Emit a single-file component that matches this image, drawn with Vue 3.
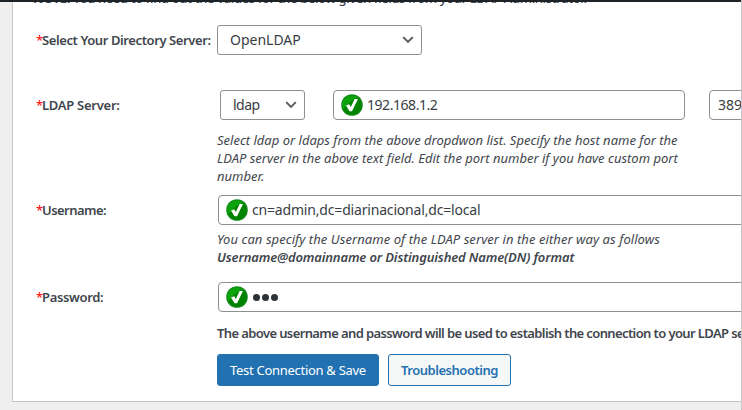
<script setup>
import { h } from 'vue'

const help = [
  'Select ldap or ldaps from the above dropdwon list. Specify the host name for the',
  'LDAP server in the above text field. Edit the port number if you have custom port',
  'number.'
]

const Chevron = () =>
  h('svg', { class: 'chevron', width: 12, height: 8, viewBox: '0 0 12 8' }, [
    h('path', { d: 'M1.2 1.2 L6 6 L10.8 1.2', fill: 'none', stroke: '#555a5f', 'stroke-width': 1.9 })
  ])

const Valid = () =>
  h('svg', { class: 'valid', width: 22, height: 22, viewBox: '0 0 22 22' }, [
    h('circle', { cx: 11, cy: 11, r: 10.8, fill: '#1c8a24' }),
    h('circle', { cx: 11, cy: 11, r: 9.9, fill: '#008400' }),
    h('path', { d: 'M2.2 15.5 A9.9 9.9 0 0 1 17.5 3.6 Q8 7 2.2 15.5Z', fill: '#0ca30c' }),
    h('path', { d: 'M5 11.6 L8.2 10.2 L9.8 13 L13.6 4.9 L17 4.9 L11 17.2 L8.5 17.2 Z', fill: '#fff' })
  ])
</script>

<template>
  <div class="page">
    <div class="adminbar"></div>
    <main class="card">
      <p class="note"><span class="t-note"><b>NOTE:</b> You need to find out the values for the below given fields from your LDAP Administrator.</span></p>

      <div class="row directory">
        <label><i>*</i><span class="t-dir">Select Your Directory Server:</span></label>
        <div class="box select-dir"><span class="t-open">OpenLDAP</span><Chevron /></div>
      </div>

      <div class="row server">
        <label><i>*</i><span class="t-ldap">LDAP Server:</span></label>
        <div class="fields">
          <div class="box select-proto"><span class="t-proto">ldap</span><Chevron /></div>
          <div class="box host"><Valid /><span class="t-host">192.168.1.2</span></div>
          <div class="box port"><span>389</span></div>
        </div>
      </div>
      <div class="help help-server">
        <div v-for="(line, n) in help" :key="n">{{ line }}</div>
      </div>

      <div class="row username">
        <label><i>*</i><span class="t-user">Username:</span></label>
        <div class="box wide"><Valid /><span class="t-cn">cn=admin,dc=diarinacional,dc=local</span></div>
      </div>
      <div class="help help-user">
        <div><span class="t-way">You can specify the Username of the LDAP server in the either way as follows</span></div>
        <div><b class="t-dn">Username@domainname or Distinguished Name(DN) format</b></div>
      </div>

      <div class="row password">
        <label><i>*</i><span class="t-pass">Password:</span></label>
        <div class="box wide"><Valid /><span class="dots"><em></em><em></em><em></em></span></div>
      </div>
      <p class="summary"><span class="t-sum">The above username and password will be used to establish the connection to your LDAP server.</span></p>

      <div class="actions">
        <button class="primary"><span class="t-test">Test Connection &amp; Save</span></button>
        <button class="secondary"><span class="t-trouble">Troubleshooting</span></button>
      </div>
    </main>
  </div>
</template>

<style>
body { overflow: hidden; }
</style>

<style scoped>
* { box-sizing: border-box; }
.page {
  width: 742px;
  height: 410px;
  overflow: hidden;
  background: #efefef;
  border-right: 1px solid #c8c8c8;
  font: 13px/18px "Noto Sans", sans-serif;
  color: #3f464d;
  white-space: nowrap;
}
.adminbar { height: 2px; background: #1d2327; }
.card {
  margin-left: 12px;
  height: 400px;
  overflow: hidden;
  background: #fff;
  border: solid #c6c6c7;
  border-width: 0 0 1px 1px;
}
.note { margin: -13px 0 0 20px; height: 18px; line-height: 18px; font-weight: 500; }
.row { display: flex; align-items: center; height: 30px; padding-left: 23px; }
.row label { display: flex; flex: none; width: 181px; font-weight: 600; }
.row label i { width: 6px; flex: none; font-style: normal; font-weight: 400; color: #f00; }
.directory { margin-top: 18px; }
.server { margin-top: 35px; }
.username { margin-top: 10px; }
.password { margin-top: 16px; }
.box {
  display: flex;
  align-items: center;
  flex: none;
  height: 30px;
  border: 1px solid #8c8f94;
  border-radius: 4px;
  background: #fff;
  font-size: 14px;
  line-height: 28px;
  color: #383e44;
}
.select-dir { width: 205px; border-radius: 3px; padding: 0 7px 0 12px; justify-content: space-between; }
.fields { display: flex; margin-left: 3px; }
.select-proto { width: 85px; border-radius: 3px; padding: 0 7px 0 12px; justify-content: space-between; }
.host { width: 352px; margin-left: 28px; padding-left: 7px; gap: 4px; }
.port { width: 60px; margin-left: 24px; padding-left: 8px; }
.wide { width: 600px; margin-left: 1px; padding-left: 7px; gap: 4px; }
.help { margin-left: 204px; font-style: italic; }
.help-server { margin-top: 11px; }
.help-user { margin-top: 5px; }
.help b { font-weight: 600; }
.dots { display: flex; gap: 2px; padding-left: 1px; }
.dots em { width: 7px; height: 7px; border-radius: 50%; background: #2c3338; }
.summary { margin: 12px 0 0 204px; font-weight: 600; }
.actions { display: flex; gap: 9px; margin: 12px 0 0 204px; }
button { font: 13px/30px "Noto Sans", sans-serif; height: 32px; padding: 0 0 0 12px; border: 1px solid #2271b1; border-radius: 3px; text-align: left; }
.primary { width: 162px; background: #2271b1; color: #fff; }
.secondary { width: 123px; background: #f6f7f7; color: #2271b1; font-weight: 600; }
.t-note { letter-spacing: -0.37px; }
.t-dir { letter-spacing: -0.4px; }
.t-ldap { letter-spacing: -0.27px; }
.t-user { letter-spacing: -0.55px; }
.t-pass { letter-spacing: -0.35px; }
.t-host { letter-spacing: -0.45px; }
.t-cn { letter-spacing: -0.18px; }
.t-proto { letter-spacing: -0.5px; }
.t-way { letter-spacing: 0.065px; }
.t-dn { letter-spacing: -0.14px; }
.t-sum { letter-spacing: -0.61px; }
.t-test { letter-spacing: -0.29px; }
.t-trouble { letter-spacing: -0.47px; }
</style>
